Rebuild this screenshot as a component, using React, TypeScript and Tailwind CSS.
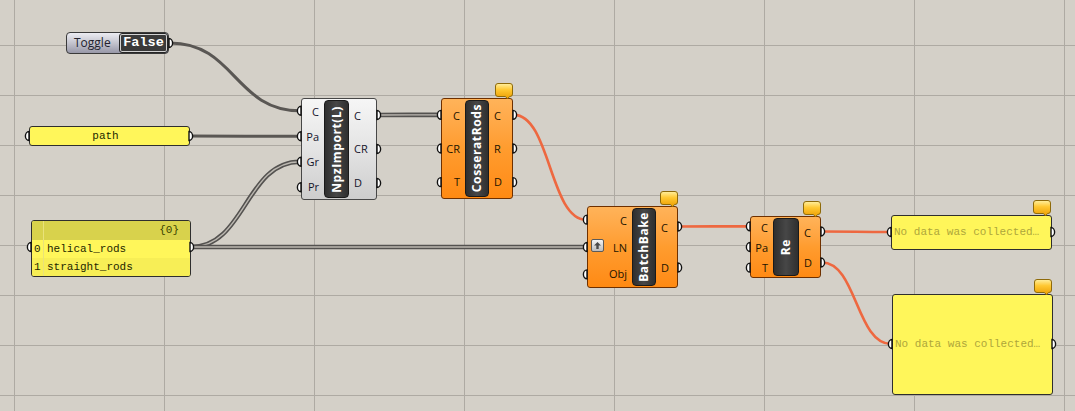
import React from 'react';

const GRID_X = [14, 164, 314, 464, 614, 764, 914, 1064];
const GRID_Y = [45, 95, 145, 195, 245, 295, 345, 395];

type Comp = {
  id: string;
  name: string;
  x: number;
  y: number;
  w: number;
  h: number;
  left: number;
  cap: number;
  inputs: string[];
  outputs: string[];
  theme: 'orange' | 'gray';
  badge?: boolean;
  arrow?: boolean;
};

const comps: Comp[] = [
  { id: 'npz', name: 'NpzImport(L)', x: 301, y: 98, w: 76, h: 102, left: 23, cap: 25, inputs: ['C', 'Pa', 'Gr', 'Pr'], outputs: ['C', 'CR', 'D'], theme: 'gray' },
  { id: 'cos', name: 'CosseratRods', x: 441, y: 98, w: 72, h: 101, left: 24, cap: 24, inputs: ['C', 'CR', 'T'], outputs: ['C', 'R', 'D'], theme: 'orange', badge: true },
  { id: 'bake', name: 'BatchBake', x: 587, y: 206, w: 91, h: 82, left: 45, cap: 24, inputs: ['C', 'LN', 'Obj'], outputs: ['C', 'D'], theme: 'orange', badge: true, arrow: true },
  { id: 're', name: 'Re', x: 750, y: 216, w: 71, h: 62, left: 23, cap: 26, inputs: ['C', 'Pa', 'T'], outputs: ['C', 'D'], theme: 'orange', badge: true },
];

const byId = (id: string) => comps.find((c) => c.id === id)!;
const inPort = (id: string, i: number) => {
  const c = byId(id);
  return { x: c.x - 1, y: c.y + (c.h * (i + 0.5)) / c.inputs.length };
};
const outPort = (id: string, i: number) => {
  const c = byId(id);
  return { x: c.x + c.w + 1, y: c.y + (c.h * (i + 0.5)) / c.outputs.length };
};

type Pt = { x: number; y: number };
type Wire = { a: Pt; b: Pt; kind: 'dark' | 'list' | 'orange' };

const toggleOut = { x: 170, y: 43 };
const pathOut = { x: 190, y: 136 };
const listOut = { x: 191, y: 247 };
const panel1In = { x: 890, y: 232 };
const panel2In = { x: 891, y: 344 };

const wires: Wire[] = [
  { a: toggleOut, b: inPort('npz', 0), kind: 'dark' },
  { a: pathOut, b: inPort('npz', 1), kind: 'dark' },
  { a: listOut, b: inPort('npz', 2), kind: 'list' },
  { a: listOut, b: inPort('bake', 1), kind: 'list' },
  { a: outPort('npz', 0), b: inPort('cos', 0), kind: 'list' },
  { a: outPort('cos', 0), b: inPort('bake', 0), kind: 'orange' },
  { a: outPort('bake', 0), b: inPort('re', 0), kind: 'orange' },
  { a: outPort('re', 0), b: panel1In, kind: 'orange' },
  { a: outPort('re', 1), b: panel2In, kind: 'orange' },
];

const curve = (a: Pt, b: Pt) => {
  const d = Math.max(Math.abs(b.x - a.x) * 0.5, 8);
  return `M ${a.x} ${a.y} C ${a.x + d} ${a.y}, ${b.x - d} ${b.y}, ${b.x} ${b.y}`;
};

const ports: { p: Pt; side: 'l' | 'r' }[] = [
  { p: toggleOut, side: 'r' },
  { p: { x: 28, y: 136 }, side: 'l' },
  { p: pathOut, side: 'r' },
  { p: { x: 30, y: 247 }, side: 'l' },
  { p: listOut, side: 'r' },
  { p: panel1In, side: 'l' },
  { p: { x: 1052, y: 232 }, side: 'r' },
  { p: panel2In, side: 'l' },
  { p: { x: 1053, y: 344 }, side: 'r' },
  ...comps.flatMap((c) => [
    ...c.inputs.map((_, i) => ({ p: inPort(c.id, i), side: 'l' as const })),
    ...c.outputs.map((_, i) => ({ p: outPort(c.id, i), side: 'r' as const })),
  ]),
];

function Badge({ right, bottom }: { right: number; bottom: number }) {
  return (
    <svg className="absolute" style={{ left: right - 18, top: bottom - 16 }} width={18} height={17}>
      <defs>
        <linearGradient id="badgeFill" x1="0" y1="0" x2="0" y2="1">
          <stop offset="0" stopColor="#fff0a0" />
          <stop offset="0.4" stopColor="#ffc832" />
          <stop offset="1" stopColor="#eb9c00" />
        </linearGradient>
      </defs>
      <path
        d="M3 0.5 H15 Q17.5 0.5 17.5 3 V11 Q17.5 13.5 15 13.5 H14.5 L12.5 16 L10.5 13.5 H3 Q0.5 13.5 0.5 11 V3 Q0.5 0.5 3 0.5 Z"
        fill="url(#badgeFill)"
        stroke="#8e6a0a"
        strokeWidth="1"
      />
    </svg>
  );
}

function Component({ c }: { c: Comp }) {
  const body =
    c.theme === 'orange'
      ? 'bg-linear-to-b from-[#ffb359] via-[#ff9c2e] to-[#ff8a12] border-[#6e3000]'
      : 'bg-linear-to-b from-[#f6f6f6] via-[#e4e4e4] to-[#cdcdcd] border-[#474747]';
  const label = c.theme === 'orange' ? 'text-[#1c1400]' : 'text-[#14142a]';
  return (
    <div
      className={`absolute flex rounded-[3px] border ${body}`}
      style={{ left: c.x, top: c.y, width: c.w, height: c.h }}
    >
      <div className="flex flex-col" style={{ width: c.left - 1 }}>
        {c.inputs.map((n) => (
          <div key={n} className={`flex flex-1 items-center justify-end pr-[5px] text-[11px] leading-none ${label}`}>
            {n}
          </div>
        ))}
      </div>
      <div
        className="my-[1px] flex items-center justify-center rounded-[4px] border border-[#1a1a1a] bg-linear-to-r from-[#2f2f2f] via-[#474747] to-[#2f2f2f]"
        style={{ width: c.cap }}
      >
        <span className="rotate-180 whitespace-nowrap text-[12px] font-bold leading-none tracking-[0.6px] text-white [writing-mode:vertical-rl]">
          {c.name}
        </span>
      </div>
      <div className="flex flex-1 flex-col">
        {c.outputs.map((n) => (
          <div key={n} className={`flex flex-1 items-center pl-[5px] text-[11px] leading-none ${label}`}>
            {n}
          </div>
        ))}
      </div>
      {c.arrow && (
        <div className="absolute left-[3px] top-[32px] flex h-[13px] w-[13px] items-center justify-center rounded-[2px] border border-[#5a5a5a] bg-linear-to-b from-[#f4f4f4] to-[#bcbcbc]">
          <svg width="9" height="9" viewBox="0 0 9 9">
            <path d="M4.5 1 L8 4.6 H5.7 V8 H3.3 V4.6 H1 Z" fill="#4a4a4a" />
          </svg>
        </div>
      )}
    </div>
  );
}

export default function App() {
  return (
    <div className="relative h-[411px] w-[1075px] overflow-hidden bg-[#d4d0c8] [font-family:'Open_Sans','Noto_Sans',sans-serif]">
      <svg className="absolute left-0 top-0" width={1075} height={411}>
        {GRID_X.map((x) => (
          <line key={'x' + x} x1={x + 0.5} y1={0} x2={x + 0.5} y2={411} stroke="#aeaaa3" strokeWidth={1} />
        ))}
        {GRID_Y.map((y) => (
          <line key={'y' + y} x1={0} y1={y + 0.5} x2={1075} y2={y + 0.5} stroke="#aeaaa3" strokeWidth={1} />
        ))}
        {wires.map((w, i) =>
          w.kind === 'list' ? (
            <g key={i}>
              <path d={curve(w.a, w.b)} fill="none" stroke="#545250" strokeWidth={4.6} />
              <path d={curve(w.a, w.b)} fill="none" stroke="#bcb8b1" strokeWidth={1.4} />
            </g>
          ) : (
            <path
              key={i}
              d={curve(w.a, w.b)}
              fill="none"
              stroke={w.kind === 'orange' ? '#ee6840' : '#5a5754'}
              strokeWidth={w.kind === 'orange' ? 2.6 : 3}
            />
          ),
        )}
      </svg>

      {/* Boolean toggle */}
      <div className="absolute left-[66px] top-[32px] flex h-[22px] w-[103px] items-center justify-between rounded-[4px] border border-[#3a3a3a] bg-linear-to-b from-[#ececf2] via-[#c4c4ce] to-[#9898a8] pl-[7px] pr-[1px]">
        <span className="text-[12px] leading-none text-[#22222e]">Toggle</span>
        <div className="flex h-[18px] w-[47px] items-center justify-center rounded-[2px] border border-[#d2d2d2] bg-[#3a3a3a] outline outline-1 outline-[#262626]">
          <span className="text-[13.5px] font-bold leading-none text-white [font-family:'Liberation_Mono',monospace]">False</span>
        </div>
      </div>

      {/* path panel */}
      <div className="absolute left-[29px] top-[126px] flex h-[20px] w-[161px] items-center justify-center rounded-[3px] border border-[#2e2e2e] bg-[#fff65a] pr-[8px]">
        <span className="text-[11px] leading-none text-[#222800] [font-family:'Liberation_Mono',monospace]">path</span>
      </div>

      {/* list panel */}
      <div className="absolute left-[31px] top-[220px] flex h-[57px] w-[160px] flex-col overflow-hidden rounded-[3px] border border-[#2e2e2e] bg-[#fff65a] text-[11px] leading-none text-[#1e2600] [font-family:'Liberation_Mono',monospace]">
        <div className="flex h-[19px] bg-[#d8d24c]">
          <div className="w-[12px] border-r border-[#e9e27a]" />
          <div className="flex flex-1 items-center justify-end pr-[11px] text-[#3a4400]">{'{0}'}</div>
        </div>
        <div className="flex h-[18px] bg-[#fff65a]">
          <div className="flex w-[12px] items-center border-r border-[#e9e27a] pl-[2px]">0</div>
          <div className="flex flex-1 items-center pl-[3px]">helical_rods</div>
        </div>
        <div className="flex flex-1 bg-[#f7ee56]">
          <div className="flex w-[12px] items-center border-r border-[#e9e27a] pl-[2px]">1</div>
          <div className="flex flex-1 items-center pl-[3px]">straight_rods</div>
        </div>
      </div>

      {comps.map((c) => (
        <Component key={c.id} c={c} />
      ))}

      {/* output panels */}
      <div className="absolute left-[891px] top-[215px] flex h-[35px] w-[161px] items-center rounded-[3px] border border-[#2e2e2e] bg-[#fff65a] pl-[2px]">
        <span className="text-[11px] leading-none text-[#aea63a] [font-family:'Liberation_Mono',monospace]">No data was collected…</span>
      </div>
      <div className="absolute left-[892px] top-[294px] flex h-[101px] w-[161px] items-center rounded-[3px] border border-[#2e2e2e] bg-[#fff65a] pl-[2px]">
        <span className="text-[11px] leading-none text-[#aea63a] [font-family:'Liberation_Mono',monospace]">No data was collected…</span>
      </div>

      {comps
        .filter((c) => c.badge)
        .map((c) => (
          <Badge key={c.id} right={c.x + c.w} bottom={c.y + 1} />
        ))}
      <Badge right={1051} bottom={216} />
      <Badge right={1052} bottom={295} />

      <svg className="pointer-events-none absolute left-0 top-0" width={1075} height={411}>
        {ports.map(({ p, side }, i) => (
          <path
            key={i}
            d={
              side === 'l'
                ? `M ${p.x + 1} ${p.y - 4.5} A 3.6 4.5 0 0 0 ${p.x + 1} ${p.y + 4.5} Z`
                : `M ${p.x - 1} ${p.y - 4.5} A 3.6 4.5 0 0 1 ${p.x - 1} ${p.y + 4.5} Z`
            }
            fill="#ffffff"
            stroke="#111111"
            strokeWidth={1.4}
          />
        ))}
      </svg>
    </div>
  );
}
